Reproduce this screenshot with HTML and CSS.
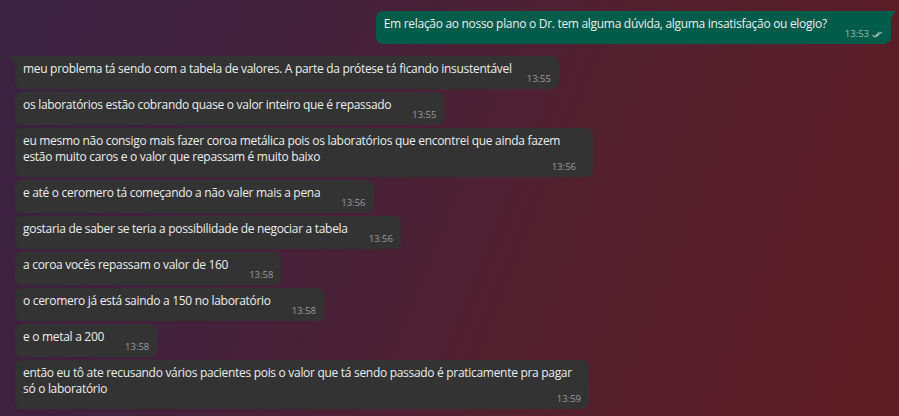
FILE: index.html
```html
<!DOCTYPE html>
<html lang="pt-BR">
<head>
<meta charset="utf-8">
<title>Chat</title>
<link rel="stylesheet" href="styles.css">
</head>
<body>
<div class="chat">
  <div class="row out-row">
    <div class="msg out tail-out">
      <span class="text">Em relação ao nosso plano o Dr. tem alguma dúvida, alguma insatisfação ou elogio?</span>
      <span class="time">13:53
        <svg class="ticks" width="11" height="7" viewBox="0 0 11 7"><path d="M0.5 3.8 L2.6 5.9 L7.3 0.8 M4.2 5.9 L9.8 0.8" fill="none" stroke="currentColor" stroke-width="1.1"/></svg>
      </span>
    </div>
  </div>

  <div class="list">
    <div class="msg in tail-in first">
      <span class="text">meu problema tá sendo com a tabela de valores. A parte da prótese tá ficando insustentável</span>
      <span class="time">13:55</span>
    </div>
    <div class="msg in">
      <span class="text">os laboratórios estão cobrando quase o valor inteiro que é repassado</span>
      <span class="time">13:55</span>
    </div>
    <div class="msg in multi wide-a">
      <span class="text">eu mesmo não consigo mais fazer coroa metálica pois os laboratórios que encontrei que ainda fazem<br>estão muito caros e o valor que repassam é muito baixo</span>
      <span class="time">13:56</span>
    </div>
    <div class="msg in">
      <span class="text">e até o ceromero tá começando a não valer mais a pena</span>
      <span class="time">13:56</span>
    </div>
    <div class="msg in">
      <span class="text">gostaria de saber se teria a possibilidade de negociar a tabela</span>
      <span class="time">13:56</span>
    </div>
    <div class="msg in">
      <span class="text">a coroa vocês repassam o valor de 160</span>
      <span class="time">13:58</span>
    </div>
    <div class="msg in">
      <span class="text">o ceromero já está saindo a 150 no laboratório</span>
      <span class="time">13:58</span>
    </div>
    <div class="msg in">
      <span class="text">e o metal a 200</span>
      <span class="time">13:58</span>
    </div>
    <div class="msg in multi wide-b">
      <span class="text">então eu tô ate recusando vários pacientes pois o valor que tá sendo passado é praticamente pra pagar<br>só o laboratório</span>
      <span class="time">13:59</span>
    </div>
  </div>
</div>
</body>
</html>
```

FILE: styles.css
```css
* { box-sizing: border-box; }

html, body {
  margin: 0;
  height: 100%;
}

body {
  background: linear-gradient(112deg, #3a2242 0%, #43213b 30%, #52202f 60%, #5f1d24 100%);
  font-family: "Open Sans", "Noto Sans", sans-serif;
  font-size: 12px;
  letter-spacing: -0.3px;
  color: #eceeef;
  overflow: hidden;
}

.chat {
  padding: 11px 8px 0 15px;
  display: flex;
  flex-direction: column;
}

.out-row {
  display: flex;
  justify-content: flex-end;
  margin-bottom: 12px;
}

.list {
  display: flex;
  flex-direction: column;
  align-items: flex-start;
  gap: 3px;
}

.msg {
  position: relative;
  display: flex;
  align-items: flex-end;
  padding: 5px 8px 4px 8px;
  border-radius: 7px;
}

.msg.in {
  background: #333333;
}

.msg.out {
  background: #035c4a;
}

.text {
  line-height: 16px;
  padding-bottom: 8px;
  white-space: nowrap;
}

.time {
  flex-shrink: 0;
  margin-left: 21px;
  font-size: 9.5px;
  letter-spacing: 0;
  line-height: 12px;
  color: #9c9c9c;
  white-space: nowrap;
  display: flex;
  align-items: center;
  gap: 3px;
}

.msg.first .time {
  margin-left: 15px;
}

.out .time {
  color: #9fbdb5;
  margin-left: 18px;
}

.ticks {
  color: #9fbdb5;
}

.msg.multi {
  flex-direction: column;
  align-items: stretch;
}

.msg.multi .time {
  align-self: flex-end;
  margin-top: -12px;
  margin-left: 0;
}

.msg.wide-a { width: 578px; padding-right: 17px; }
.msg.wide-b { width: 574px; padding-right: 8px; }

.tail-out {
  border-top-right-radius: 0;
}

.tail-out::after {
  content: "";
  position: absolute;
  top: 0;
  right: -5px;
  width: 0;
  height: 0;
  border-top: 7px solid #035c4a;
  border-right: 5px solid transparent;
}

.tail-in {
  border-top-left-radius: 0;
}

.tail-in::before {
  content: "";
  position: absolute;
  top: 0;
  left: -6px;
  width: 0;
  height: 0;
  border-top: 7px solid #333333;
  border-left: 6px solid transparent;
}
```
